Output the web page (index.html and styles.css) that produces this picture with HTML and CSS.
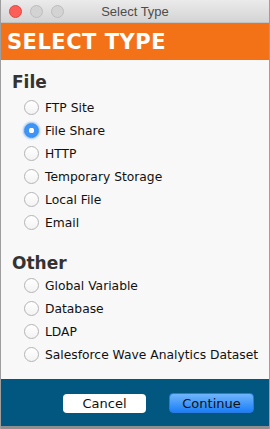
FILE: index.html
```html
<!DOCTYPE html>
<html lang="en">
<head>
    <meta charset="UTF-8">
    <meta name="viewport" content="width=device-width, initial-scale=1.0">
    <title>Select Type</title>
    <link rel="stylesheet" href="styles.css">
</head>
<body>
    <div class="window">
        <div class="titlebar">
            <div class="lights">
                <span class="light close"></span>
                <span class="light"></span>
                <span class="light"></span>
            </div>
            <div class="title">Select Type</div>
        </div>

        <div class="banner">SELECT TYPE</div>

        <div class="content">
            <div class="group">
                <h3>File</h3>
                <label class="option"><input type="radio" name="type"><span class="dot"></span>FTP Site</label>
                <label class="option"><input type="radio" name="type" checked><span class="dot"></span>File Share</label>
                <label class="option"><input type="radio" name="type"><span class="dot"></span>HTTP</label>
                <label class="option"><input type="radio" name="type"><span class="dot"></span>Temporary Storage</label>
                <label class="option"><input type="radio" name="type"><span class="dot"></span>Local File</label>
                <label class="option"><input type="radio" name="type"><span class="dot"></span>Email</label>
            </div>
            <div class="group other">
                <h3>Other</h3>
                <label class="option"><input type="radio" name="type"><span class="dot"></span>Global Variable</label>
                <label class="option"><input type="radio" name="type"><span class="dot"></span>Database</label>
                <label class="option"><input type="radio" name="type"><span class="dot"></span>LDAP</label>
                <label class="option"><input type="radio" name="type"><span class="dot"></span>Salesforce Wave Analytics Dataset</label>
            </div>
        </div>

        <div class="footer">
            <button class="btn">Cancel</button>
            <button class="btn primary">Continue</button>
        </div>
    </div>
</body>
</html>
```

FILE: styles.css
```css
html, body {
    margin: 0;
    padding: 0;
    background-color: #a3a3a3;
    font-family: "DejaVu Sans", "Liberation Sans", sans-serif;
}
.window {
    width: 268px;
    border-left: 1px solid #9e9e9e;
    border-right: 1px solid #9e9e9e;
    background-color: #f8f8f8;
}
.titlebar {
    height: 22px;
    border-bottom: 1px solid #c2c2c2;
    background: linear-gradient(#ebebeb, #d4d4d4);
    display: flex;
    align-items: center;
    position: relative;
}
.lights {
    display: flex;
    gap: 8px;
    padding-left: 8px;
}
.light {
    width: 11px;
    height: 11px;
    border-radius: 50%;
    background-color: #d3d3d3;
    border: 0.5px solid #bdbdbd;
}
.light.close {
    background-color: #fc5f57;
    border-color: #df4944;
}
.title {
    position: absolute;
    left: 0;
    right: 0;
    text-align: center;
    font-family: "Liberation Sans", sans-serif;
    font-size: 13px;
    color: #4d4d4d;
}
.banner {
    height: 37px;
    line-height: 38px;
    background-color: #f37117;
    color: #fff;
    font-weight: bold;
    font-size: 21px;
    letter-spacing: 0.5px;
    padding-left: 6px;
}
.content {
    height: 319px;
    padding-top: 12px;
    box-sizing: border-box;
}
h3 {
    margin: 0 0 4px 11px;
    font-size: 17px;
    line-height: 20px;
    color: #333;
}
.group.other {
    margin-top: 19px;
}
.group.other h3 {
    margin-bottom: 1px;
}
.option {
    display: flex;
    align-items: center;
    height: 23px;
    padding-left: 23px;
    font-size: 12.3px;
    color: #111;
    white-space: nowrap;
}
.option input {
    display: none;
}
.dot {
    width: 13px;
    height: 13px;
    border-radius: 50%;
    border: 1px solid #b4b4b4;
    background: linear-gradient(#ffffff, #f3f3f3);
    margin-right: 6px;
    flex-shrink: 0;
}
.option input:checked + .dot {
    border-color: #2f88f0;
    background: radial-gradient(circle, #fff 0, #fff 2.5px, #3c95f7 3px);
    box-shadow: 0 0 2px 1px rgba(80, 150, 240, 0.6);
}
.footer {
    height: 47px;
    background-color: #01577f;
    border-bottom: 3px solid #8f8f8f;
    display: flex;
    justify-content: flex-end;
    align-items: center;
    gap: 23px;
    padding-right: 15px;
}
.btn {
    width: 83px;
    height: 19px;
    padding: 0;
    border: 0;
    border-radius: 4px;
    background-color: #fff;
    font-family: "DejaVu Sans", sans-serif;
    font-size: 13px;
    color: #111;
    margin-top: 2px;
}
.btn.primary {
    width: 85px;
    height: 20px;
    background: linear-gradient(#6fb5fb, #1b7ff9);
    border: 1px solid #2a7ae0;
    box-sizing: border-box;
    margin-top: 1px;
}
```
